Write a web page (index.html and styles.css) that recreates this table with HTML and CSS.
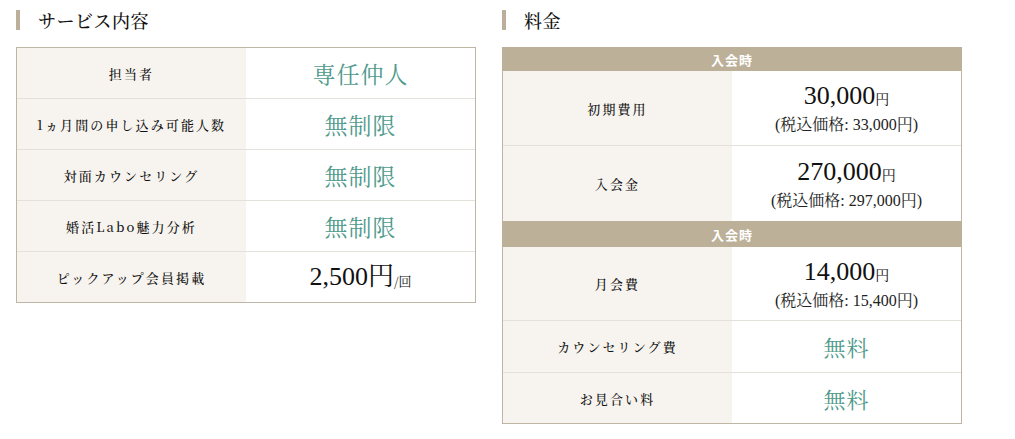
FILE: index.html
```html
<!DOCTYPE html>
<html lang="ja">
<head>
<meta charset="utf-8">
<link rel="stylesheet" href="styles.css">
</head>
<body>
<div class="page">
  <section class="col">
    <h2 class="heading">サービス内容</h2>
    <div class="table">
      <div class="row r-std"><div class="label">担当者</div><div class="value green">専任仲人</div></div>
      <div class="row r-std"><div class="label">1ヵ月間の申し込み可能人数</div><div class="value green">無制限</div></div>
      <div class="row r-std"><div class="label">対面カウンセリング</div><div class="value green">無制限</div></div>
      <div class="row r-std"><div class="label">婚活Labo魅力分析</div><div class="value green">無制限</div></div>
      <div class="row r-std last"><div class="label">ピックアップ会員掲載</div><div class="value"><span class="price">2,500円</span><span class="per">/回</span></div></div>
    </div>
  </section>
  <section class="col">
    <h2 class="heading">料金</h2>
    <div class="table">
      <div class="band b1">入会時</div>
      <div class="row r-price"><div class="label">初期費用</div><div class="value stack"><span class="price">30,000<span class="yen">円</span></span><span class="tax">(税込価格: 33,000円)</span></div></div>
      <div class="row r-price nob"><div class="label">入会金</div><div class="value stack"><span class="price">270,000<span class="yen">円</span></span><span class="tax">(税込価格: 297,000円)</span></div></div>
      <div class="band b2">入会時</div>
      <div class="row r-price2"><div class="label">月会費</div><div class="value stack"><span class="price">14,000<span class="yen">円</span></span><span class="tax">(税込価格: 15,400円)</span></div></div>
      <div class="row r-std2"><div class="label">カウンセリング費</div><div class="value green small">無料</div></div>
      <div class="row r-std2 last"><div class="label">お見合い料</div><div class="value green small">無料</div></div>
    </div>
  </section>
</div>
</body>
</html>
```

FILE: styles.css
```css
* { box-sizing: border-box; }
html, body { margin: 0; padding: 0; background: #fff; }
body {
  font-family: "Noto Serif CJK JP", "Liberation Serif", "Noto Sans CJK JP", serif;
  color: #222;
}
.page {
  display: flex;
  gap: 26px;
  padding: 10px 0 0 16px;
}
.col { width: 460px; }
.heading {
  margin: 0;
  height: 20px;
  display: flex;
  align-items: center;
  border-left: 4px solid #bcb09a;
  padding-left: 18px;
  font-size: 18px;
  font-weight: 500;
  letter-spacing: 0.5px;
  font-family: "Noto Serif CJK JP", "Liberation Serif", "Noto Sans CJK JP", serif;
  color: #111;
}
.table {
  margin-top: 17px;
  border: 1px solid #bfb5a4;
}
.row {
  display: flex;
  border-bottom: 1px solid #e4e0da;
}
.row.last, .row.nob { border-bottom: none; }
.r-std { height: 51px; }
.r-std.last { height: 50px; }
.r-price { height: 75px; }
.r-price.nob { height: 75px; }
.r-price2 { height: 74px; }
.r-std2 { height: 52px; }
.r-std2.last { height: 50px; }
.label {
  width: 229px;
  background: #f7f4ef;
  display: flex;
  align-items: center;
  justify-content: center;
  font-size: 13px;
  font-weight: 500;
  letter-spacing: 2.1px;
  color: #111;
  font-family: "Noto Serif CJK JP", "Liberation Serif", "Noto Sans CJK JP", serif;
}
.value {
  flex: 1;
  display: flex;
  align-items: center;
  justify-content: center;
  background: #fff;
}
.value.stack { flex-direction: column; gap: 0; }
.green {
  color: #4f9a8c;
  font-size: 23px;
  letter-spacing: 1px;
}
.green.small { font-size: 22px; }
.price {
  font-family: "Liberation Serif", "Noto Serif CJK JP", "Noto Sans CJK JP", serif;
  font-size: 26px;
  line-height: 30px;
  color: #111;
}
.yen { font-size: 14px; }
.per { font-size: 13px; margin-top: 6px; color: #111; }
.tax {
  font-family: "Liberation Serif", "Noto Serif CJK JP", "Noto Sans CJK JP", serif;
  font-size: 16px;
  line-height: 20px;
  color: #222;
}
.band {
  background: #bcb098;
  color: #fff;
  font-weight: bold;
  font-size: 13px;
  letter-spacing: 1px;
  display: flex;
  align-items: center;
  justify-content: center;
  font-family: "Noto Sans CJK JP", sans-serif;
}
.b1 { margin: -1px -1px 0; height: 24px; }
.b2 { height: 26px; margin: 0 -1px; }
```
